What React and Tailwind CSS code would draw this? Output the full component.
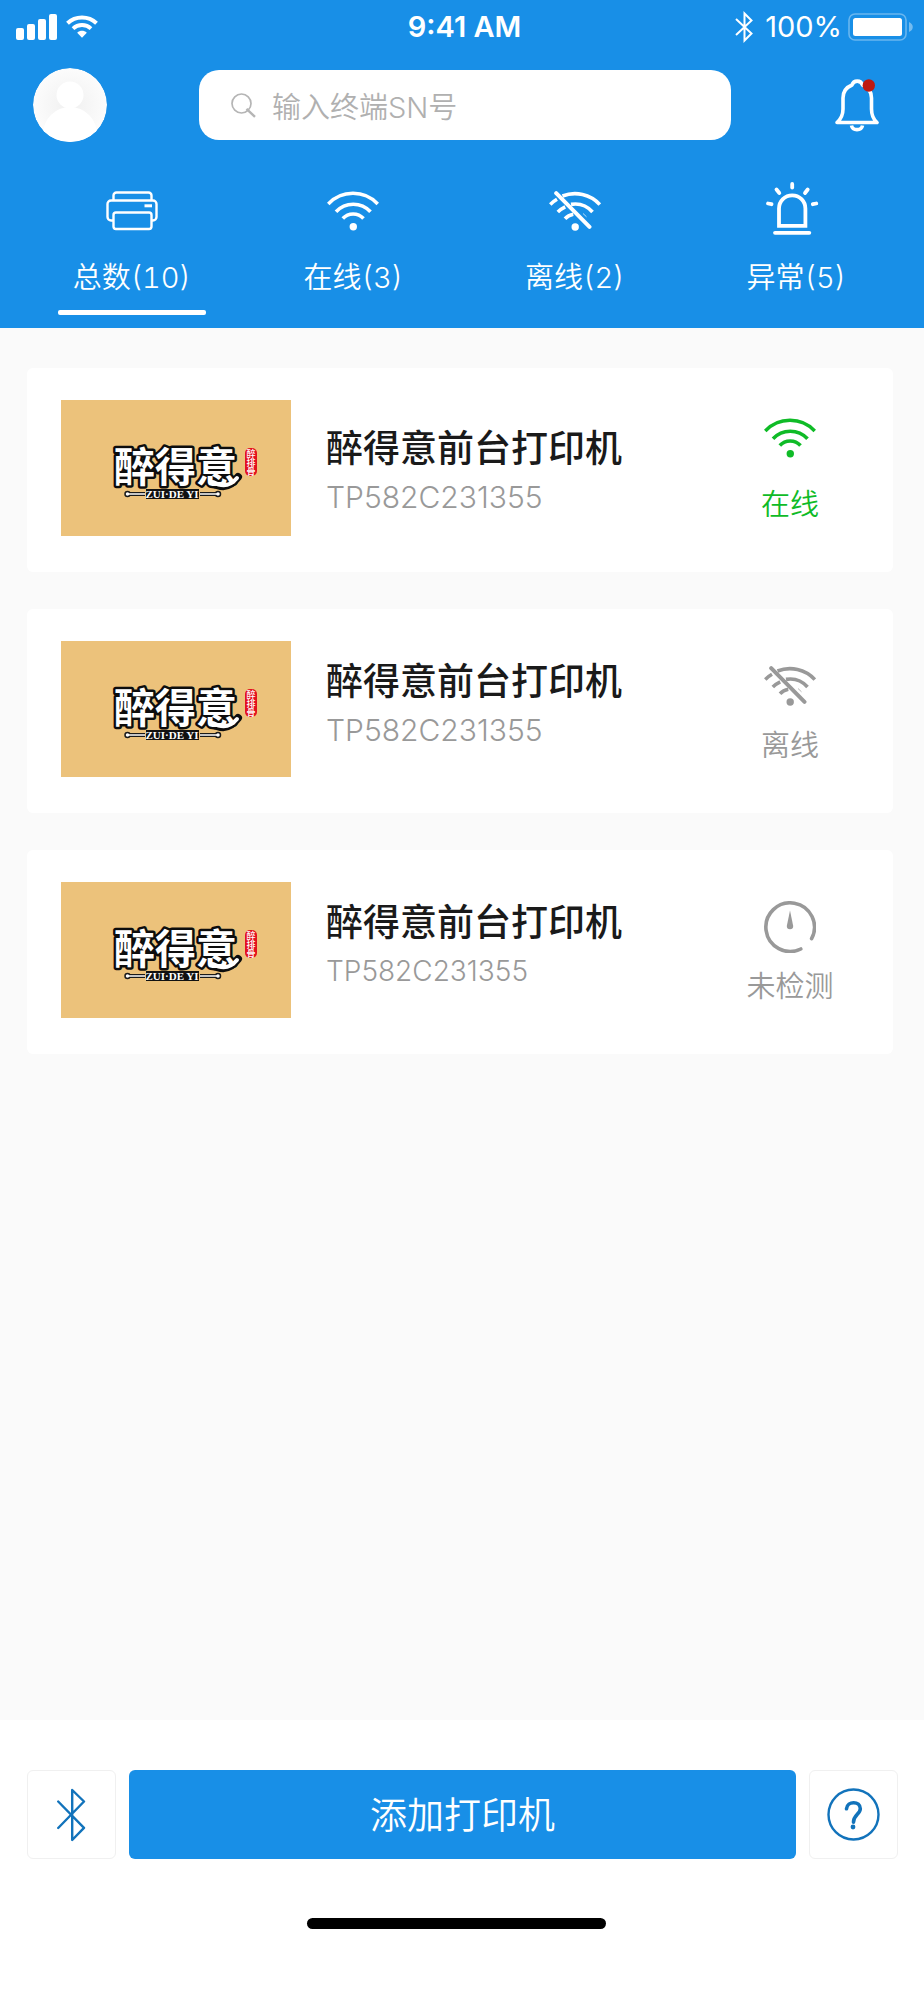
import { useState } from 'react';
import clsx from 'clsx';

function SignalIcon() {
  return (
    <svg width="42" height="26" viewBox="0 0 42 26" fill="currentColor" aria-hidden="true">
      <rect x="0" y="14" width="8" height="12" rx="2" />
      <rect x="11" y="10" width="8" height="16" rx="2" />
      <rect x="22" y="5" width="8" height="21" rx="2" />
      <rect x="33" y="0" width="8" height="26" rx="2" />
    </svg>
  );
}

function StatusWifiIcon() {
  return (
    <svg width="32" height="24" viewBox="0 0 32 24" fill="none" stroke="currentColor" aria-hidden="true">
      <path d="M1.5 8.2C9.5 0.6 22.5 0.6 30.5 8.2" strokeWidth="4" />
      <path d="M7 13.6C12 8.8 20 8.8 25 13.6" strokeWidth="3.8" />
      <path d="M11.2 17.8C14 15.2 18 15.2 20.8 17.8L16 22.8Z" fill="currentColor" stroke="none" />
    </svg>
  );
}

function StatusBluetoothIcon() {
  return (
    <svg width="18" height="32" viewBox="0 0 18 32" fill="none" stroke="currentColor" strokeWidth="2" aria-hidden="true">
      <path d="M1 8L16.5 22.5L9.5 29.5V2.5L16.5 9.5L1 24" />
    </svg>
  );
}

function BatteryIcon() {
  return (
    <svg width="65" height="28" viewBox="0 0 65 28" aria-hidden="true">
      <rect x="1" y="1" width="57" height="26" rx="6" fill="none" stroke="#fff" strokeOpacity="0.35" strokeWidth="1.6" />
      <rect x="5" y="5" width="49" height="18" rx="2.5" fill="#fff" />
      <path d="M61 9C66 11 66 17 61 19Z" fill="#fff" fillOpacity="0.4" />
    </svg>
  );
}

function AvatarIcon() {
  return (
    <svg width="74" height="74" viewBox="0 0 74 74" aria-hidden="true">
      <defs>
        <radialGradient id="avatar-bg" cx="0.5" cy="0.5" r="0.5">
          <stop offset="0" stopColor="#f0f0f0" />
          <stop offset="1" stopColor="#fcfcfc" />
        </radialGradient>
        <clipPath id="avatar-clip">
          <circle cx="37" cy="37" r="37" />
        </clipPath>
      </defs>
      <g clipPath="url(#avatar-clip)">
        <circle cx="37" cy="37" r="37" fill="url(#avatar-bg)" />
        <circle cx="37" cy="27" r="13.5" fill="#fff" />
        <circle cx="37" cy="66" r="27" fill="#fff" />
      </g>
    </svg>
  );
}

function SearchIcon() {
  return (
    <svg width="25" height="25" viewBox="0 0 25 25" fill="none" stroke="#b5b5b5" aria-hidden="true">
      <circle cx="10.5" cy="10.5" r="9.5" strokeWidth="1.7" />
      <path d="M15.5 15.8L24 23.8" strokeWidth="2.4" />
    </svg>
  );
}

function BellIcon() {
  return (
    <svg width="44" height="53" viewBox="0 0 44 53" fill="none" stroke="#fff" strokeWidth="3.6" aria-hidden="true">
      <path
        d="M2 43.5C6 40 8 36 8 30V19C8 12 12 8 17 6C18.5 0.8 26 0.8 27.5 6C32.5 8 36.5 12 36.5 19V30C36.5 36 38 40 42 43.5Z"
        strokeLinejoin="round"
      />
      <path d="M16.5 46.5C17.5 52 26.5 52 27.5 46.5" />
      <circle cx="33.8" cy="6.5" r="6.2" fill="#bd1a12" stroke="none" />
    </svg>
  );
}

function PrinterIcon() {
  return (
    <svg width="52" height="40" viewBox="0 0 52 40" fill="none" stroke="currentColor" strokeWidth="2.4" aria-hidden="true">
      <path d="M7.5 9.5V4.5A3 3 0 0 1 10.5 1.5H42.5A3 3 0 0 1 45.5 4.5V9.5" />
      <path d="M7.5 29.5H5A3.5 3.5 0 0 1 1.5 26V13A3.5 3.5 0 0 1 5 9.5H47A3.5 3.5 0 0 1 50.5 13V26A3.5 3.5 0 0 1 47 29.5H45.5" />
      <rect x="7.5" y="21.5" width="38" height="16.5" rx="2.5" />
      <path d="M38.5 14.8H46" strokeWidth="3" />
    </svg>
  );
}

function WifiIcon() {
  return (
    <svg width="52" height="40" viewBox="0 0 52 40" fill="none" stroke="currentColor" strokeWidth="3.6" aria-hidden="true">
      <path d="M1.2 13A34 34 0 0 1 50.8 13" />
      <path d="M9 20.8A23.5 23.5 0 0 1 43.5 20.8" />
      <path d="M15.8 27.5A14 14 0 0 1 36.5 27.5" />
      <circle cx="26.3" cy="35.8" r="3.7" fill="currentColor" stroke="none" />
    </svg>
  );
}

function WifiOffIcon() {
  return (
    <svg width="52" height="40" viewBox="0 0 52 40" fill="none" stroke="currentColor" strokeWidth="3.6" aria-hidden="true">
      <path d="M13.5 5A34 34 0 0 1 50.8 13.5" />
      <path d="M1.2 13.5Q4.2 10.5 8 8.3" />
      <path d="M22 13.4A23.5 23.5 0 0 1 43.5 21" />
      <path d="M8.8 21Q12 17.8 16.2 15.8" />
      <path d="M16 27.8Q19.2 24.2 24.3 23.3" />
      <path d="M34 22.5L37.5 25.8" strokeWidth="0.7" />
      <path d="M7.2 2.2L40.5 35.8" strokeWidth="4" strokeLinecap="round" />
      <circle cx="26.2" cy="36" r="3.7" fill="currentColor" stroke="none" />
    </svg>
  );
}

function AlarmIcon() {
  return (
    <svg width="60" height="58" viewBox="0 0 60 58" fill="none" stroke="currentColor" strokeWidth="3.8" aria-hidden="true">
      <path d="M13 43.8V26.5A13.2 13.2 0 0 1 39.4 26.5V43.8Z" />
      <g strokeLinecap="round">
        <path d="M9 50.8H43.3" />
        <path d="M26.2 2V5.5" />
        <path d="M10.5 7.5L13.3 11" />
        <path d="M41.7 7.5L39 11" />
        <path d="M2 21.5L5.5 22.2" />
        <path d="M50.3 21.5L46.8 22.2" />
      </g>
    </svg>
  );
}

function GaugeIcon() {
  return (
    <svg width="52" height="52" viewBox="0 0 52 52" fill="none" aria-hidden="true">
      <path d="M36.8 48A24.3 24.3 0 1 1 47.6 37.6" stroke="currentColor" strokeWidth="3.6" strokeLinecap="round" />
      <path d="M26 9.5L29.2 25A3.2 3.2 0 1 1 22.8 25Z" fill="currentColor" />
    </svg>
  );
}

function BluetoothIcon() {
  return (
    <svg width="30" height="54" viewBox="0 0 30 54" fill="none" stroke="#1273bb" strokeWidth="2.4" strokeLinecap="round" strokeLinejoin="round" aria-hidden="true">
      <path d="M1.2 13.5L27 39.8L15.2 52V2L27 13.5L1.2 40" />
    </svg>
  );
}

function HelpIcon() {
  return (
    <svg width="53" height="53" viewBox="0 0 53 53" fill="none" stroke="#1273bb" aria-hidden="true">
      <circle cx="26.5" cy="26.5" r="25" strokeWidth="2.4" />
      <path d="M19.5 20.8C20.3 12.5 33.3 12.8 33.3 20.8C33.3 26 26.5 27 26.5 34.2" strokeWidth="3.6" strokeLinecap="round" />
      <circle cx="26" cy="39" r="2.4" fill="#1273bb" stroke="none" />
    </svg>
  );
}

function BrandLogo() {
  return (
    <svg
      viewBox="0 0 230 136"
      role="img"
      aria-label="醉得意"
      className="w-[230px] shrink-0 bg-[#ecc27b] font-['Noto_Sans_CJK_SC',sans-serif]"
    >
      <path d="M150 82Q166 92 177 77" fill="none" stroke="#0d0d0d" strokeWidth="8" strokeLinecap="round" />
      <text
        x="53"
        y="82"
        fontSize="41"
        fontWeight="700"
        fill="#fff"
        stroke="#0d0d0d"
        strokeWidth="5"
        strokeLinejoin="round"
        paintOrder="stroke"
      >
        醉得意
      </text>
      <path d="M152 82Q166 90 176 78" fill="none" stroke="#fff" strokeWidth="4" strokeLinecap="round" />
      <path d="M66 94H84M139 94H157" stroke="#1a1a1a" strokeWidth="4" />
      <g fill="#fff" stroke="#1a1a1a" strokeWidth="1.5">
        <circle cx="66.5" cy="94" r="2.5" />
        <circle cx="157" cy="94" r="2.5" />
      </g>
      <path d="M67 94H84M139 94H156" stroke="#fff" strokeWidth="1.5" />
      <rect x="85" y="89" width="53" height="10" fill="#111" />
      <text
        x="111"
        y="98"
        fontSize="11"
        fontWeight="700"
        textAnchor="middle"
        fill="#fff"
        className="font-['Liberation_Serif',serif]"
      >
        ZUI·DE YI
      </text>
      <rect x="184" y="48" width="12" height="28" rx="5" fill="#e3101f" />
      <text x="190" y="49" fontSize="9" fontWeight="500" fill="#fff" className="[writing-mode:vertical-rl]">
        醉排骨
      </text>
    </svg>
  );
}

const TABS = [
  { id: 'all', label: '总数', count: 10, Icon: PrinterIcon },
  { id: 'online', label: '在线', count: 3, Icon: WifiIcon },
  { id: 'offline', label: '离线', count: 2, Icon: WifiOffIcon },
  { id: 'error', label: '异常', count: 5, Icon: AlarmIcon },
];

const STATUS = {
  online: { label: '在线', Icon: WifiIcon, color: 'text-[#0fbb27]', iconAlign: 'items-start', textPad: 'pt-[22px]' },
  offline: { label: '离线', Icon: WifiOffIcon, color: 'text-[#999999]', iconAlign: 'items-center', textPad: 'pt-[14px]' },
  unchecked: { label: '未检测', Icon: GaugeIcon, color: 'text-[#999999]', iconAlign: 'items-center', textPad: 'pt-[14px]' },
};

const PRINTERS = [
  { id: 1, name: '醉得意前台打印机', sn: 'TP582C231355', status: 'online', snSize: 'text-[30px]' },
  { id: 2, name: '醉得意前台打印机', sn: 'TP582C231355', status: 'offline', snSize: 'text-[30px]' },
  { id: 3, name: '醉得意前台打印机', sn: 'TP582C231355', status: 'unchecked', snSize: 'text-[28px]' },
];

function StatusBar() {
  return (
    <div className="grid h-[54px] grid-cols-3 items-center pl-4 pr-[11px] text-[29px] leading-[30px]">
      <div className="flex items-center gap-2">
        <SignalIcon />
        <StatusWifiIcon />
      </div>
      <p className="text-center font-semibold">9:41 AM</p>
      <div className="flex items-center justify-end">
        <StatusBluetoothIcon />
        <span className="ml-3 mr-1.5">100%</span>
        <BatteryIcon />
      </div>
    </div>
  );
}

function PrinterCard({ printer }) {
  const status = STATUS[printer.status];

  return (
    <li className="flex rounded-md bg-white pb-9 pl-[34px] pt-8">
      <BrandLogo />
      <div className={clsx('min-w-0 flex-1 pl-[35px]', status.textPad)}>
        <h2 className="text-[37px] font-medium leading-[54px] text-[#1a1a1a]">{printer.name}</h2>
        <p className={clsx('font-[350] leading-[42px] text-[#999999]', printer.snSize)}>{printer.sn}</p>
      </div>
      <div className={clsx('flex w-[206px] shrink-0 flex-col items-center gap-3 pt-[18px]', status.color)}>
        <span className={clsx('flex h-[54px]', status.iconAlign)}>
          <status.Icon />
        </span>
        <span className="text-[29px] font-[350] leading-[42px]">{status.label}</span>
      </div>
    </li>
  );
}

export default function App() {
  const [activeTab, setActiveTab] = useState('all');
  const [keyword, setKeyword] = useState('');

  return (
    <div className="flex min-h-screen flex-col bg-[#fafafa] font-[Inter,'Noto_Sans_CJK_SC',sans-serif]">
      <header className="bg-[#188fe7] text-white">
        <StatusBar />

        <div className="flex items-center pl-[33px] pr-[45px] pt-[14px]">
          <button type="button" aria-label="个人中心" className="shrink-0 rounded-full">
            <AvatarIcon />
          </button>
          <label className="ml-[92px] mr-[104px] flex h-[70px] min-w-0 flex-1 items-center gap-4 rounded-[20px] bg-white pl-8 pr-6">
            <SearchIcon />
            <input
              type="text"
              aria-label="输入终端SN号"
              placeholder="输入终端SN号"
              value={keyword}
              onChange={(e) => setKeyword(e.target.value)}
              className="h-full min-w-0 flex-1 pt-1 text-[29px] font-[350] text-[#333333] outline-none placeholder:text-[#b0b0b0]"
            />
          </label>
          <button type="button" aria-label="消息通知" className="shrink-0">
            <BellIcon />
          </button>
        </div>

        <nav className="grid grid-cols-4 pb-[13px] pl-[21px] pr-[17px] pt-10">
          {TABS.map(({ id, label, count, Icon }) => (
            <button
              key={id}
              type="button"
              aria-pressed={activeTab === id}
              onClick={() => setActiveTab(id)}
              className="flex flex-col items-center"
            >
              <span className="flex h-[58px] items-center">
                <Icon />
              </span>
              <span className="mt-[17px] text-[29px] font-[350] leading-[42px] tabular-nums">
                {label}({count})
              </span>
              <span className={clsx('mt-[11px] h-[5px] w-[148px] rounded-xs', activeTab === id && 'bg-white')} />
            </button>
          ))}
        </nav>
      </header>

      <main className="flex-1 pb-10 pl-[27px] pr-[31px] pt-10">
        <ul className="flex flex-col gap-[37px]">
          {PRINTERS.map((printer) => (
            <PrinterCard key={printer.id} printer={printer} />
          ))}
        </ul>
      </main>

      <footer className="bg-white pb-[71px] pl-[27px] pr-[26px] pt-[50px]">
        <div className="flex gap-[13px]">
          <button
            type="button"
            aria-label="蓝牙"
            className="grid size-[89px] shrink-0 place-items-center rounded-md border border-[#f0f0f0]"
          >
            <BluetoothIcon />
          </button>
          <button type="button" className="h-[89px] flex-1 rounded-md bg-[#188fe7] pt-0.5 text-[37px] font-[350] text-white">
            添加打印机
          </button>
          <button
            type="button"
            aria-label="帮助"
            className="grid size-[89px] shrink-0 place-items-center rounded-md border border-[#f0f0f0]"
          >
            <HelpIcon />
          </button>
        </div>
        <div className="flex justify-center pr-[13px] pt-[59px]">
          <div className="h-[11px] w-[299px] rounded-full bg-black" />
        </div>
      </footer>
    </div>
  );
}
